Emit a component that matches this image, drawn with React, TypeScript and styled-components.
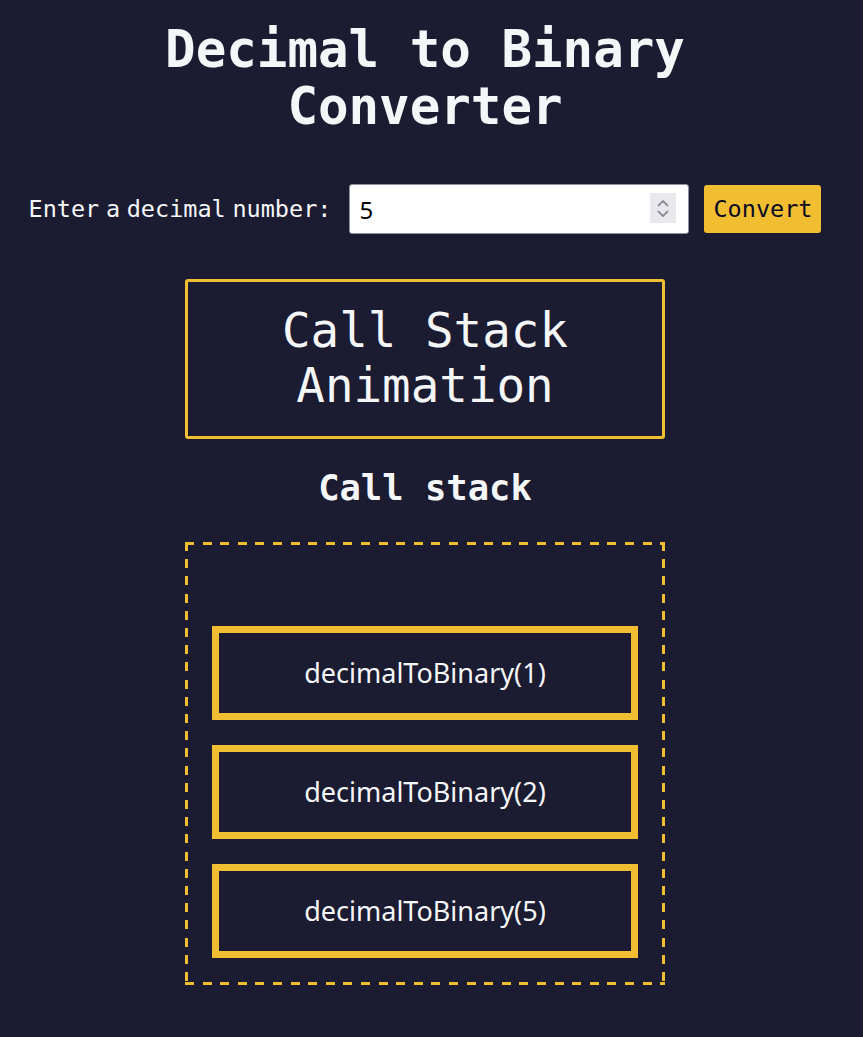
import React from "react";
import styled, { createGlobalStyle } from "styled-components";

const Global = createGlobalStyle`
  html, body { margin: 0; padding: 0; background: #1b1b32; }
  body { color: #f5f6f7; font-family: "DejaVu Sans Mono", monospace; }
`;

const Page = styled.main`
  width: 850px;
  display: flex;
  flex-direction: column;
  align-items: center;
  padding-bottom: 50px;
`;

const Title = styled.h1`
  margin: 21px 0 0;
  font-family: "DejaVu Sans Mono", monospace;
  font-weight: 700;
  font-size: 50.8px;
  line-height: 57px;
  text-align: center;
  width: 560px;
`;

const InputRow = styled.div`
  display: flex;
  align-items: center;
  margin-top: 49px;
  height: 50px;
`;

const Label = styled.label`
  font-family: "DejaVu Sans Mono", monospace;
  font-size: 23.5px;
  word-spacing: -7.5px;
  white-space: nowrap;
  margin-right: 18px;
`;

const InputWrap = styled.div`
  position: relative;
  margin-right: 15px;
`;

const NumberInput = styled.input`
  display: block;
  box-sizing: border-box;
  width: 340px;
  height: 50px;
  font-family: "Noto Sans", sans-serif;
  font-size: 24px;
  padding: 0 40px 0 9px;
  border: 1px solid #8f8f9d;
  border-radius: 3px;
  background: #fff;
  color: #000;
  -moz-appearance: textfield;

  &::-webkit-inner-spin-button,
  &::-webkit-outer-spin-button {
    -webkit-appearance: none;
    margin: 0;
  }
`;

const Spinner = styled.span`
  position: absolute;
  right: 13px;
  top: 9px;
  width: 26px;
  height: 30px;
  background: #e9e9ed;
  display: flex;
  flex-direction: column;
  align-items: center;
  justify-content: center;
  gap: 3px;
  pointer-events: none;
`;

const ConvertButton = styled.button`
  height: 48px;
  padding: 0 9px;
  background: #f1be32;
  border: none;
  border-radius: 3px;
  font-family: "DejaVu Sans Mono", monospace;
  font-size: 23.5px;
  color: #0a0a23;
`;

const Result = styled.div`
  box-sizing: border-box;
  width: 480px;
  height: 160px;
  margin-top: 45px;
  border: 3px solid #f1be32;
  border-radius: 3px;
  display: flex;
  align-items: center;
  justify-content: center;
  text-align: center;
  font-family: "DejaVu Sans Mono", monospace;
  font-size: 47.5px;
  line-height: 55px;
  padding-bottom: 2px;
`;

const StackHeading = styled.h2`
  margin: 28px 0 0;
  font-family: "DejaVu Sans Mono", monospace;
  font-weight: 700;
  font-size: 35.5px;
  line-height: 42px;
`;

const dashH = "repeating-linear-gradient(90deg, #f1be32 0 9px, transparent 9px 17.6px)";
const dashV = "repeating-linear-gradient(180deg, #f1be32 0 9px, transparent 9px 17.2px)";

const StackBox = styled.div`
  box-sizing: border-box;
  width: 480px;
  height: 443px;
  margin-top: 33px;
  padding: 27px;
  background:
    ${dashH} left top / 100% 3px no-repeat,
    ${dashH} left bottom / 100% 3px no-repeat,
    ${dashV} left top / 3px 100% no-repeat,
    ${dashV} right top / 3px 100% no-repeat;
  display: flex;
  flex-direction: column;
  justify-content: flex-end;
  gap: 25px;
`;

const Frame = styled.div`
  box-sizing: border-box;
  height: 94px;
  border: 7px solid #f1be32;
  display: flex;
  align-items: center;
  justify-content: center;
  font-family: "Noto Sans", sans-serif;
  font-size: 27px;
  padding-bottom: 2px;
`;

const Chevron = ({ up }: { up?: boolean }) => (
  <svg width="12" height="8" viewBox="0 0 12 8" aria-hidden="true">
    <path
      d={up ? "M1.5 6.5 L6 2 L10.5 6.5" : "M1.5 1.5 L6 6 L10.5 1.5"}
      fill="none"
      stroke="#8f8f9d"
      strokeWidth="1.8"
      strokeLinecap="round"
      strokeLinejoin="round"
    />
  </svg>
);

const frames = [1, 2, 5];

export default function App() {
  return (
    <>
      <Global />
      <Page>
        <Title>Decimal to Binary Converter</Title>
        <InputRow>
          <Label htmlFor="number-input">Enter a decimal number:</Label>
          <InputWrap>
            <NumberInput id="number-input" type="number" defaultValue={5} />
            <Spinner>
              <Chevron up />
              <Chevron />
            </Spinner>
          </InputWrap>
          <ConvertButton>Convert</ConvertButton>
        </InputRow>
        <Result>
          Call Stack
          <br />
          Animation
        </Result>
        <StackHeading>Call stack</StackHeading>
        <StackBox>
          {frames.map((n) => (
            <Frame key={n}>decimalToBinary({n})</Frame>
          ))}
        </StackBox>
      </Page>
    </>
  );
}
